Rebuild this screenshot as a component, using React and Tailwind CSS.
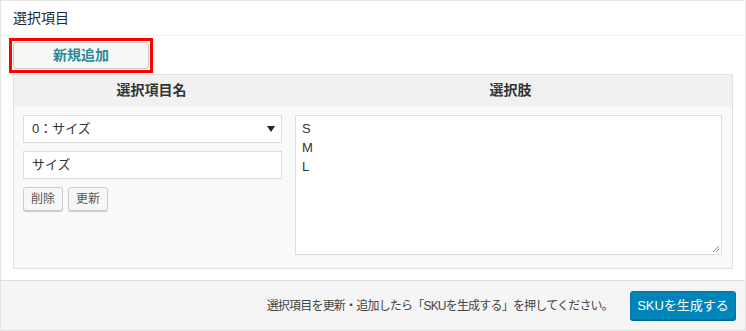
const jp = "font-['Liberation_Sans','Noto_Sans_CJK_JP',sans-serif]";

export default function App() {
    return (
        <div className={`w-[746px] h-[331px] bg-white ${jp} text-[#444]`}>
            <div className="w-full h-full border border-[#e5e5e5] flex flex-col">
                <div className="h-[35px] shrink-0 border-b border-[#eee] flex items-center pl-3 text-[14px] text-[#23282d]">
                    選択項目
                </div>

                <div className="ml-2 mt-[2px] w-[144px] border-[3px] border-[#f00] p-[1px]">
                    <button className="w-full h-[27px] bg-[#f7f7f7] border border-[#ccc] rounded-[3px] text-[14px] font-bold text-[#2b8a9c]">
                        新規追加
                    </button>
                </div>

                <div className="ml-3 mr-3 mt-[1px] border border-[#e1e1e1]">
                    <div className="grid grid-cols-[275px_1fr] h-[31px] bg-[#f1f1f1] text-[14px] font-bold text-[#333]">
                        <div className="flex items-center justify-center">選択項目名</div>
                        <div className="flex items-center justify-center">選択肢</div>
                    </div>
                    <div className="grid grid-cols-[275px_1fr] bg-[#f9f9f9] pt-[9px] pb-[13px]">
                        <div className="pl-[9px] pr-[7px] flex flex-col gap-2">
                            <div className="h-[28px] bg-white border border-[#ddd] flex items-center justify-between pl-2 pr-[6px] text-[13px] text-[#333]">
                                <span>0：サイズ</span>
                                <svg width="8" height="6" viewBox="0 0 8 6"><path d="M0 0h8L4 6z" fill="#222" /></svg>
                            </div>
                            <div className="h-[28px] bg-white border border-[#ddd] flex items-center pl-2 text-[13px] text-[#333]">
                                サイズ
                            </div>
                            <div className="flex gap-[5px]">
                                <button className="w-[40px] h-[24px] bg-[#f7f7f7] border border-[#ccc] rounded-[3px] shadow-[0_1px_0_#ccc] text-[12px] text-[#555]">削除</button>
                                <button className="w-[40px] h-[24px] bg-[#f7f7f7] border border-[#ccc] rounded-[3px] shadow-[0_1px_0_#ccc] text-[12px] text-[#555]">更新</button>
                            </div>
                        </div>
                        <div className="pl-[6px] pr-[10px]">
                            <div className="relative h-[140px] bg-white border border-[#ddd] pl-[6px] pt-[3px] text-[13px] leading-[19px] text-[#333]">
                                <div>S</div>
                                <div>M</div>
                                <div>L</div>
                                <svg className="absolute right-[1px] bottom-[1px]" width="8" height="8" viewBox="0 0 8 8">
                                    <path d="M7 1L1 7M7 4L4 7" stroke="#888" strokeWidth="1" />
                                </svg>
                            </div>
                        </div>
                    </div>
                </div>

                <div className="mt-auto h-[50px] shrink-0 border-t border-[#ddd] bg-[#f5f5f5] flex items-center justify-end pr-[9px] gap-[17px]">
                    <span className="text-[12px] tracking-[-0.8px] text-[#444]">選択項目を更新・追加したら「SKUを生成する」を押してください。</span>
                    <button className="w-[106px] h-[29px] bg-[#0085ba] border border-[#0073aa] rounded-[3px] shadow-[0_1px_0_#006799] text-[13px] text-white">
                        SKUを生成する
                    </button>
                </div>
            </div>
        </div>
    );
}
